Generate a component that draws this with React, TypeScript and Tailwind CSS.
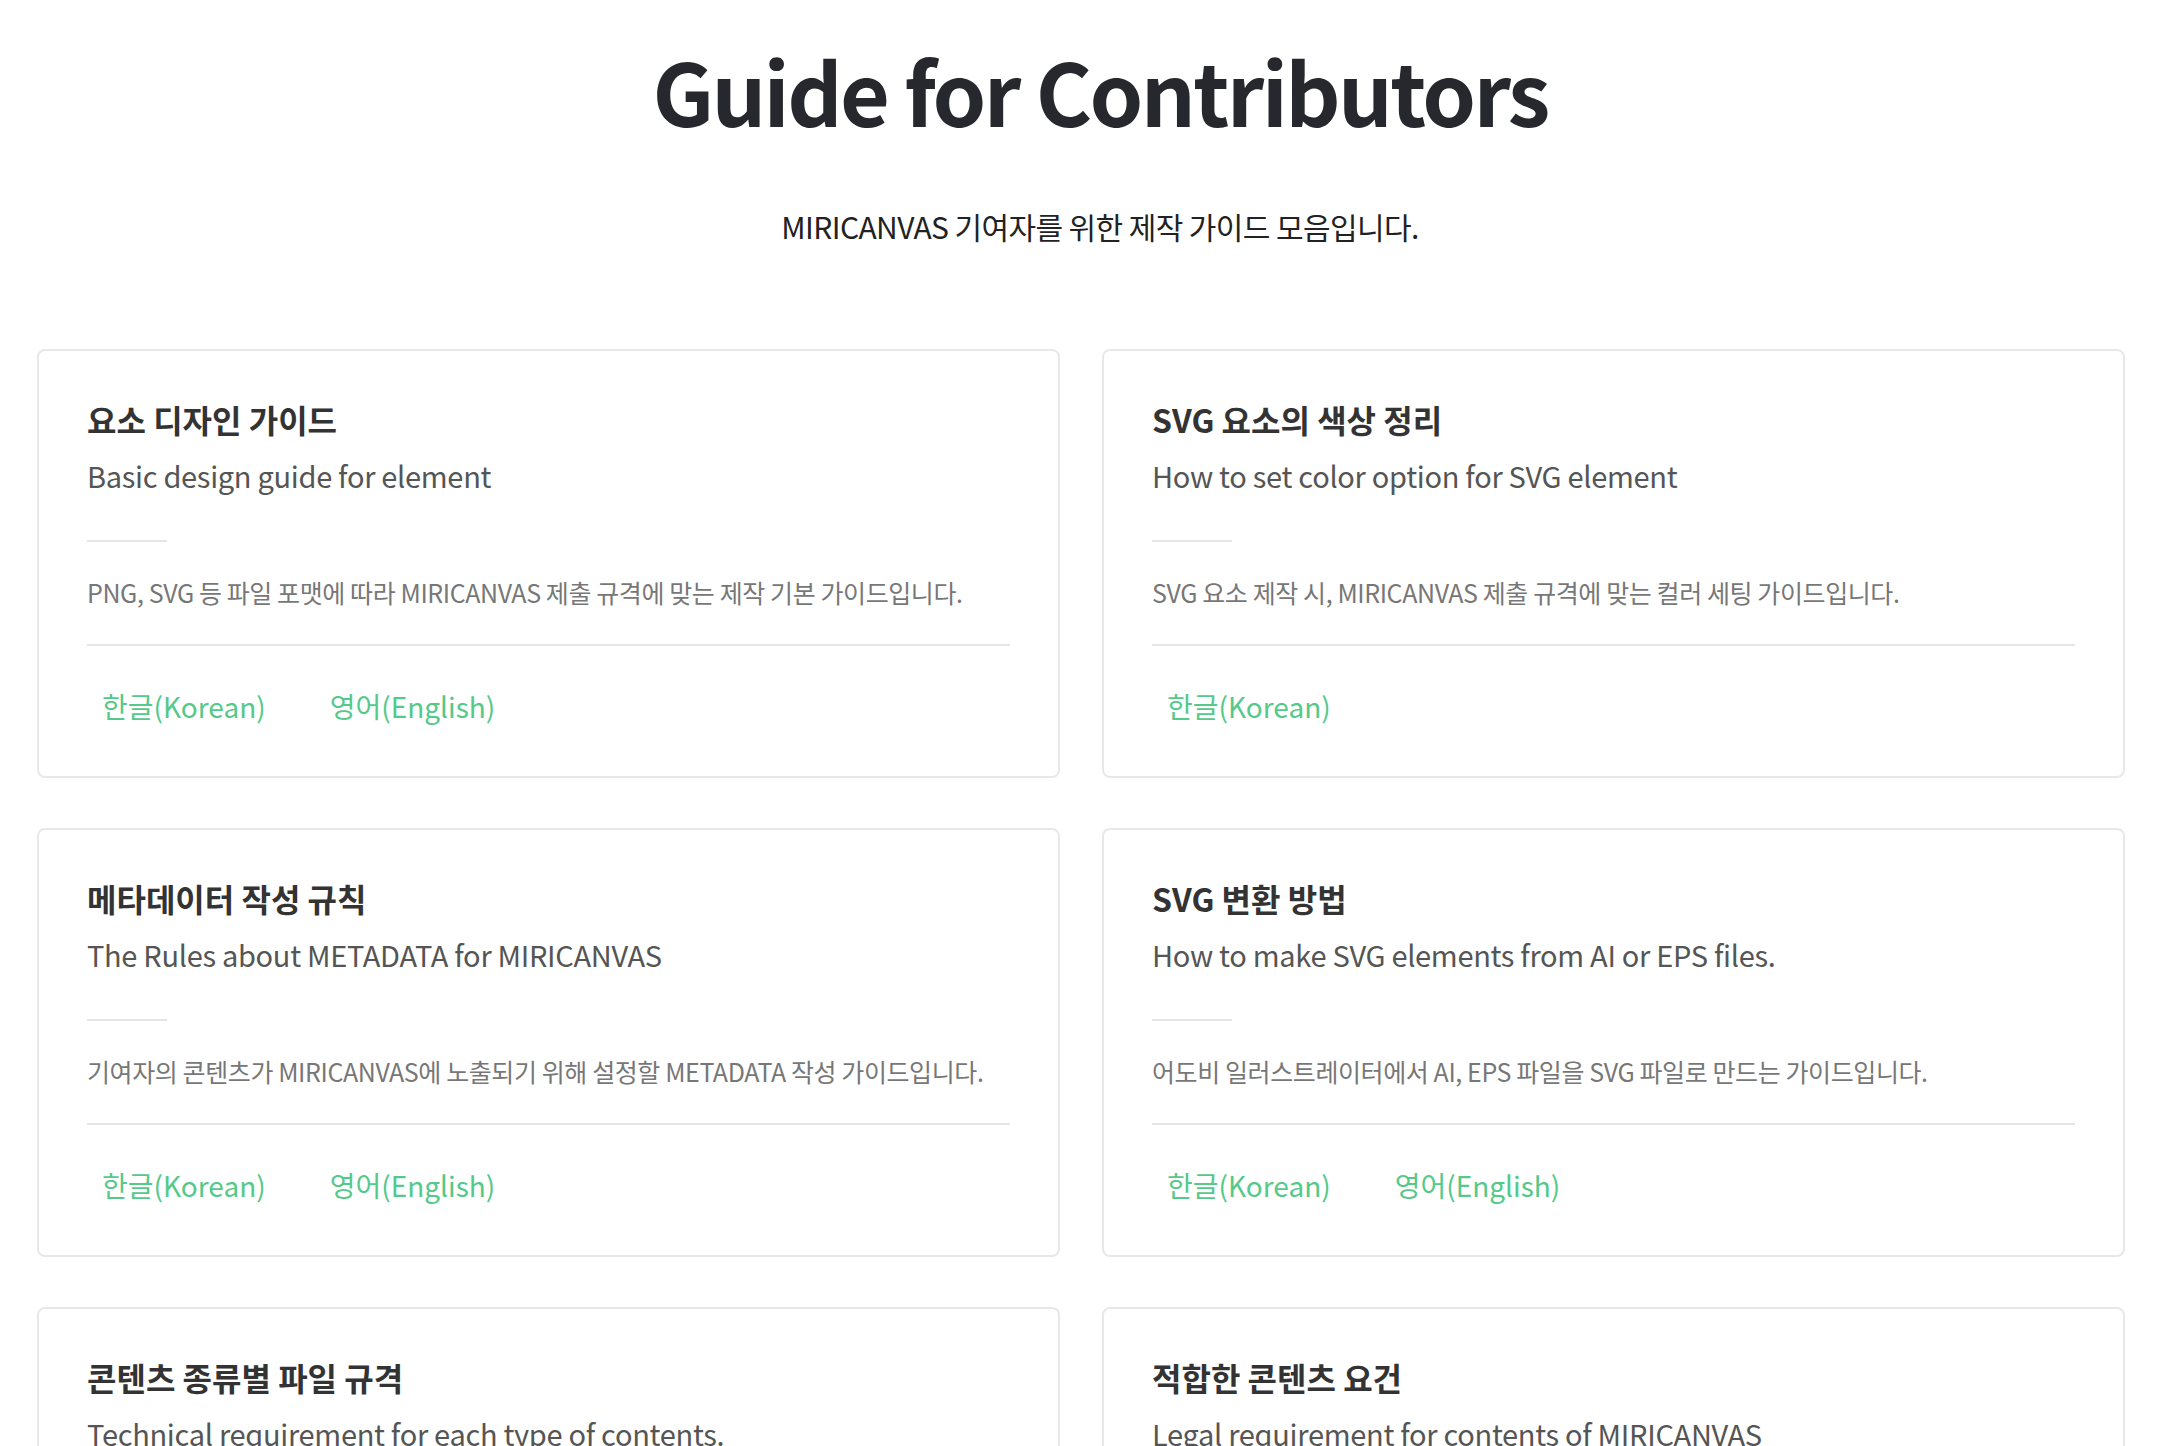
import React from "react";

type Card = {
  title: string;
  sub: string;
  desc: string;
  links: string[];
};

const cards: Card[] = [
  {
    title: "요소 디자인 가이드",
    sub: "Basic design guide for element",
    desc: "PNG, SVG 등 파일 포맷에 따라 MIRICANVAS 제출 규격에 맞는 제작 기본 가이드입니다.",
    links: ["한글(Korean)", "영어(English)"],
  },
  {
    title: "SVG 요소의 색상 정리",
    sub: "How to set color option for SVG element",
    desc: "SVG 요소 제작 시, MIRICANVAS 제출 규격에 맞는 컬러 세팅 가이드입니다.",
    links: ["한글(Korean)"],
  },
  {
    title: "메타데이터 작성 규칙",
    sub: "The Rules about METADATA for MIRICANVAS",
    desc: "기여자의 콘텐츠가 MIRICANVAS에 노출되기 위해 설정할 METADATA 작성 가이드입니다.",
    links: ["한글(Korean)", "영어(English)"],
  },
  {
    title: "SVG 변환 방법",
    sub: "How to make SVG elements from AI or EPS files.",
    desc: "어도비 일러스트레이터에서 AI, EPS 파일을 SVG 파일로 만드는 가이드입니다.",
    links: ["한글(Korean)", "영어(English)"],
  },
  {
    title: "콘텐츠 종류별 파일 규격",
    sub: "Technical requirement for each type of contents.",
    desc: "콘텐츠 종류별로 MIRICANVAS 제출 규격에 맞는 파일 기술 요건 가이드입니다.",
    links: ["한글(Korean)", "영어(English)"],
  },
  {
    title: "적합한 콘텐츠 요건",
    sub: "Legal requirement for contents of MIRICANVAS",
    desc: "MIRICANVAS에 제출 가능한 콘텐츠의 법적 요건 가이드입니다.",
    links: ["한글(Korean)", "영어(English)"],
  },
];

const font = { fontFamily: '"Noto Sans CJK KR", "Noto Sans", sans-serif' };

export default function App() {
  return (
    <div className="min-h-screen bg-white" style={font}>
      <div className="pt-[40px] pl-[38px] text-center">
        <h1 className="text-[86px] leading-[100px] font-bold text-[#27282d] tracking-[-2.6px]">
          Guide for Contributors
        </h1>
        <p className="mt-[66px] text-[30px] leading-[40px] text-[#222] tracking-[-0.6px]">
          MIRICANVAS 기여자를 위한 제작 가이드 모음입니다.
        </p>
      </div>

      <div className="mt-[103px] px-[37px] grid grid-cols-2 gap-x-[42px] gap-y-[50px]">
        {cards.map((c) => (
          <div
            key={c.title}
            className="border-2 border-[#e8e8e8] rounded-[8px] px-[48px] pt-[48px] pb-[52px]"
          >
            <div className="text-[32px] leading-[40px] font-bold text-[#333]">
              {c.title}
            </div>
            <div className="mt-[18px] text-[29px] leading-[36px] text-[#555] tracking-[-0.3px]">
              {c.sub}
            </div>
            <div className="mt-[47px] w-[80px] h-[2px] bg-[#e5e5e5]" />
            <div className="mt-[33px] text-[25px] leading-[34px] text-[#777] tracking-[-0.4px]">
              {c.desc}
            </div>
            <div className="mt-[35px] h-[2px] bg-[#e5e5e5]" />
            <div className="mt-[42px] flex gap-[33px] text-[28px] leading-[36px] text-[#55c98a]">
              {c.links.map((l) => (
                <a key={l} className="pl-[15px] pr-[16px] cursor-pointer">
                  {l}
                </a>
              ))}
            </div>
          </div>
        ))}
      </div>
      <div className="h-[80px]" />
    </div>
  );
}
